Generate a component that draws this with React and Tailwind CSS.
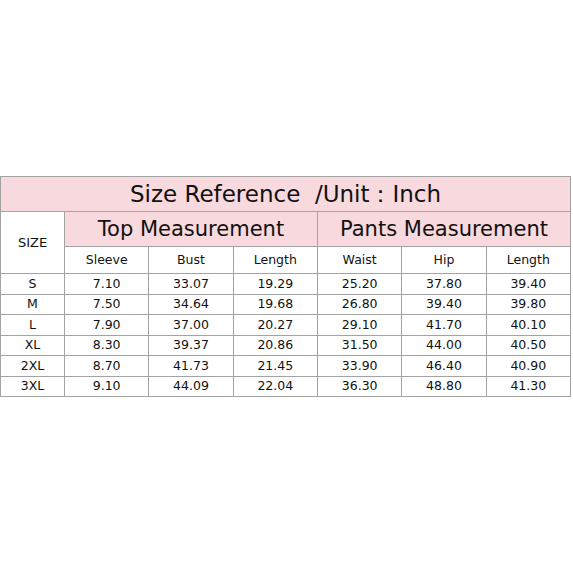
import React from "react";

const rows = [
  ["S", "7.10", "33.07", "19.29", "25.20", "37.80", "39.40"],
  ["M", "7.50", "34.64", "19.68", "26.80", "39.40", "39.80"],
  ["L", "7.90", "37.00", "20.27", "29.10", "41.70", "40.10"],
  ["XL", "8.30", "39.37", "20.86", "31.50", "44.00", "40.50"],
  ["2XL", "8.70", "41.73", "21.45", "33.90", "46.40", "40.90"],
  ["3XL", "9.10", "44.09", "22.04", "36.30", "48.80", "41.30"],
];

const cell = "border border-[#a3a3a3] text-center p-0";

export default function App() {
  return (
    <div
      className="w-[573px] h-[573px] bg-white flex items-center"
      style={{ fontFamily: '"DejaVu Sans", sans-serif' }}
    >
      <table className="table-fixed border-collapse w-[571px] text-[#111]">
        <colgroup>
          <col className="w-[64px]" />
          <col />
          <col />
          <col />
          <col />
          <col />
          <col />
        </colgroup>
        <tbody>
          <tr className="h-[35px] bg-[#f8d9dd]">
            <td colSpan={7} className={`${cell} text-[23px]`}>
              Size Reference&nbsp; /Unit：Inch
            </td>
          </tr>
          <tr className="h-[35px]">
            <td rowSpan={2} className={`${cell} bg-white text-[13px]`}>
              SIZE
            </td>
            <td colSpan={3} className={`${cell} bg-[#f8d9dd] text-[21px]`}>
              Top Measurement
            </td>
            <td colSpan={3} className={`${cell} bg-[#f8d9dd] text-[21px]`}>
              Pants Measurement
            </td>
          </tr>
          <tr className="h-[27px] text-[12.5px]">
            {["Sleeve", "Bust", "Length", "Waist", "Hip", "Length"].map((h, i) => (
              <td key={i} className={cell}>
                {h}
              </td>
            ))}
          </tr>
          {rows.map((r, i) => (
            <tr key={i} className="h-[20.5px] text-[12.5px]">
              {r.map((v, j) => (
                <td key={j} className={cell}>
                  {v}
                </td>
              ))}
            </tr>
          ))}
        </tbody>
      </table>
    </div>
  );
}
